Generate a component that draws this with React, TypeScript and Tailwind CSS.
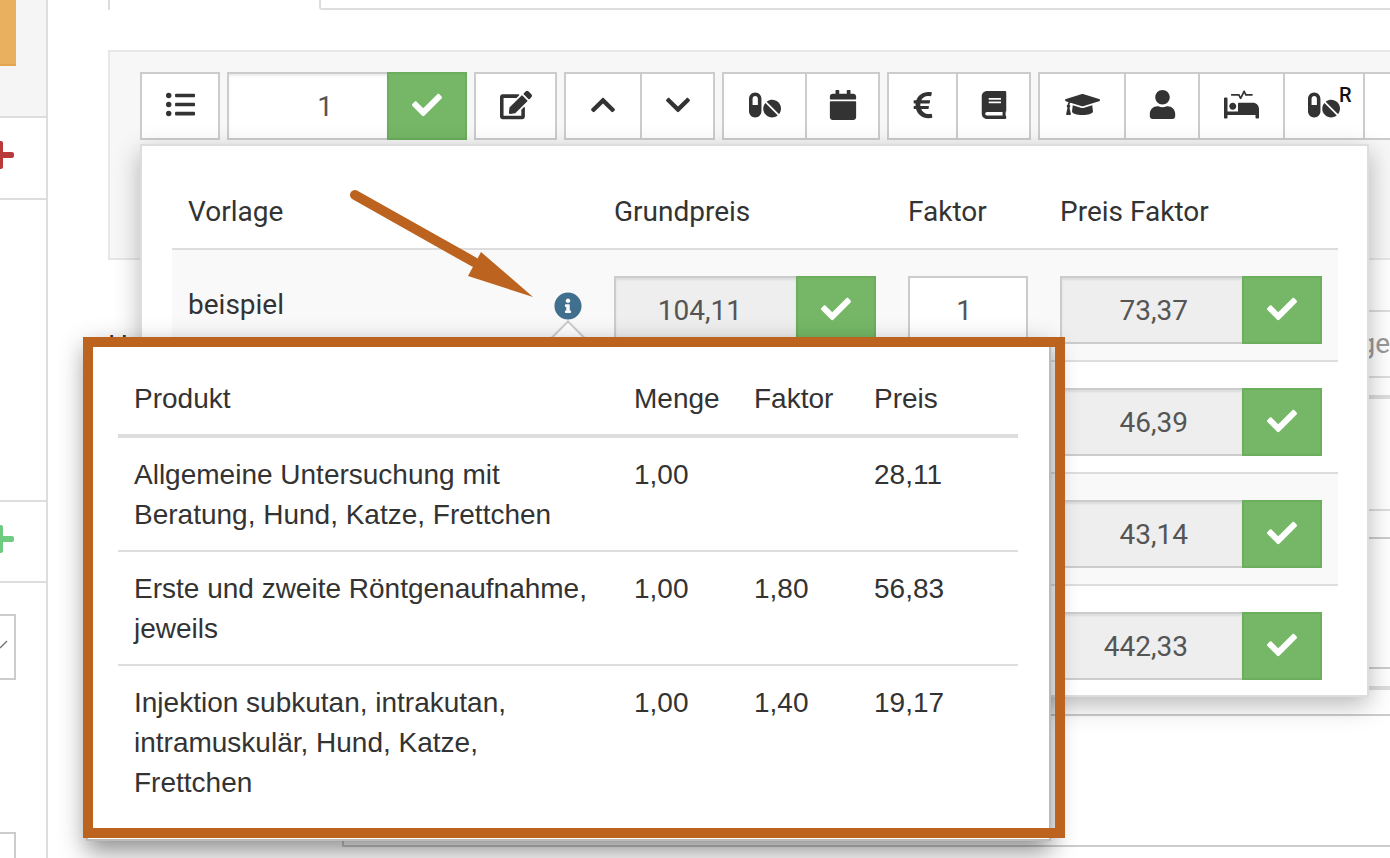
import type { ReactNode } from 'react';
import {
  FaBook,
  FaCalendar,
  FaCheck,
  FaChevronDown,
  FaChevronUp,
  FaEdit,
  FaEuroSign,
  FaGraduationCap,
  FaInfoCircle,
  FaListUl,
  FaPills,
  FaPlus,
  FaProcedures,
  FaUser
} from 'react-icons/fa';

const templates = [
  { name: 'beispiel', base: '104,11', factor: '1', price: '73,37', info: true },
  { name: '', base: '', factor: '', price: '46,39' },
  { name: '', base: '', factor: '', price: '43,14' },
  { name: '', base: '', factor: '', price: '442,33' }
];

const products = [
  { name: 'Allgemeine Untersuchung mit Beratung, Hund, Katze, Frettchen', qty: '1,00', factor: '', price: '28,11' },
  { name: 'Erste und zweite Röntgenaufnahme, jeweils', qty: '1,00', factor: '1,80', price: '56,83' },
  { name: 'Injektion subkutan, intrakutan, intramuskulär, Hund, Katze, Frettchen', qty: '1,00', factor: '1,40', price: '19,17' }
];

function ToolButton({ width, first, children }: { width: string; first?: boolean; children: ReactNode }) {
  return (
    <div className={`${width} ${first ? '' : 'border-l-2 border-l-[#ccc]'} relative flex h-full shrink-0 items-center justify-center pb-[3px] text-[#333]`}>
      {children}
    </div>
  );
}

function ToolGroup({ children }: { children: ReactNode }) {
  return <div className="flex h-[68px] shrink-0 border-2 border-[#ccc] bg-white">{children}</div>;
}

function ConfirmButton() {
  return (
    <div className="flex h-[68px] w-[80px] shrink-0 items-center justify-center border-2 border-[#6bae5b] bg-[#75b766] pb-[3px] text-white">
      <FaCheck size={30} />
    </div>
  );
}

function PriceInput({ value }: { value: string }) {
  return (
    <div className="flex">
      <div className="flex h-[68px] w-[182px] items-center justify-end border-2 border-r-0 border-[#ccc] bg-[#eeeeee] pt-[2px] pr-[54px] text-[#555] shadow-[inset_0_2px_2px_rgba(0,0,0,0.08)]">
        {value}
      </div>
      <ConfirmButton />
    </div>
  );
}

function Sidebar() {
  return (
    <div className="flex h-full w-[48px] shrink-0 flex-col overflow-hidden border-r-2 border-[#ddd] bg-white">
      <div className="h-[118px] shrink-0 border-b-2 border-[#ddd] bg-[#f5f5f5]">
        <div className="h-[66px] w-[16px] border-b-2 border-[#e3a550] bg-[#e9b05f]" />
      </div>
      <div className="flex h-[82px] shrink-0 items-center overflow-hidden border-b-2 border-[#ddd] pb-[6px]">
        <FaPlus size={32} className="-ml-[16px] shrink-0 text-[#b93a3a]" />
      </div>
      <div className="h-[300px] shrink-0" />
      <div className="flex h-[83px] shrink-0 items-center overflow-hidden border-t-2 border-b-2 border-[#ddd] pb-[6px]">
        <FaPlus size={32} className="-ml-[16px] shrink-0 text-[#6fcb7f]" />
      </div>
      <div className="mt-[31px] flex h-[66px] w-[16px] shrink-0 items-center justify-end border-2 border-l-0 border-[#ccc]">
        <svg width="10" height="10" viewBox="0 0 10 10" className="mr-[4px] -mt-[4px]">
          <path d="M0 8 L7 1" stroke="#777" strokeWidth="1.4" fill="none" />
        </svg>
      </div>
      <div className="mt-[152px] h-[40px] w-[16px] shrink-0 border-2 border-l-0 border-[#ccc]" />
    </div>
  );
}

function Toolbar() {
  return (
    <div className="flex gap-[7px] pl-[30px] pt-[20px]">
      <ToolGroup>
        <ToolButton width="w-[76px]" first>
          <FaListUl size={29} />
        </ToolButton>
      </ToolGroup>
      <div className="flex">
        <div className="flex h-[68px] w-[160px] items-center justify-center border-2 border-r-0 border-[#ccc] bg-white pt-[2px] pl-[34px] text-[#555] shadow-[inset_0_2px_2px_rgba(0,0,0,0.08)]">
          1
        </div>
        <ConfirmButton />
      </div>
      <ToolGroup>
        <ToolButton width="w-[79px]" first>
          <FaEdit size={32} />
        </ToolButton>
      </ToolGroup>
      <ToolGroup>
        <ToolButton width="w-[74px]" first>
          <FaChevronUp size={28} />
        </ToolButton>
        <ToolButton width="w-[73px]">
          <FaChevronDown size={28} />
        </ToolButton>
      </ToolGroup>
      <ToolGroup>
        <ToolButton width="w-[81px]" first>
          <FaPills size={32} />
        </ToolButton>
        <ToolButton width="w-[73px]">
          <FaCalendar size={30} />
        </ToolButton>
      </ToolGroup>
      <ToolGroup>
        <ToolButton width="w-[67px]" first>
          <FaEuroSign size={30} />
        </ToolButton>
        <ToolButton width="w-[73px]">
          <FaBook size={28} />
        </ToolButton>
      </ToolGroup>
      <ToolGroup>
        <ToolButton width="w-[84px]" first>
          <FaGraduationCap size={35} />
        </ToolButton>
        <ToolButton width="w-[74px]">
          <FaUser size={29} />
        </ToolButton>
        <ToolButton width="w-[85px]">
          <FaProcedures size={35} />
        </ToolButton>
        <ToolButton width="w-[80px]">
          <FaPills size={32} />
          <span className="absolute left-[54px] top-[11px] text-[20px] leading-[20px] font-medium text-[#111]">R</span>
        </ToolButton>
        <ToolButton width="w-[60px]">
          <span />
        </ToolButton>
      </ToolGroup>
    </div>
  );
}

function BackgroundForm() {
  return (
    <div className="flex">
      <div className="w-[234px] shrink-0 pt-[65px] text-[#333]">H</div>
      <div className="min-w-0 flex-1 pt-[50px]">
        <div className="flex h-[68px] items-center justify-end overflow-hidden border-y-2 border-[#ddd] text-[#999]">ge</div>
        <div className="mt-[17px] h-[116px] border-t-4 border-b-2 border-[#ddd]" />
        <div className="mt-[26px] h-[132px] border-y-2 border-[#ccc]" />
        <div className="mt-[17px] h-[28px] border-t-4 border-[#ddd]" />
        <div className="h-[133px] border-t-2 border-b-2 border-l-2 border-[#ccc]" />
      </div>
    </div>
  );
}

function TemplatePopover() {
  return (
    <div className="absolute left-[140px] top-[144px] z-10 h-[553px] w-[1229px] border-2 border-[#ddd] bg-white pl-[30px] pr-[29px] shadow-[0_8px_24px_rgba(0,0,0,0.28)]">
      <div className="grid grid-cols-[426px_294px_152px_1fr] border-b-2 border-[#ddd] pl-[16px] pt-[46px] pb-[16px] leading-[40px] text-[#333]">
        <div>Vorlage</div>
        <div>Grundpreis</div>
        <div>Faktor</div>
        <div>Preis Faktor</div>
      </div>
      {templates.map((row, i) => (
        <div
          key={i}
          className={`grid grid-cols-[426px_294px_152px_1fr] pl-[16px] pt-[26px] ${i === 3 ? '' : 'h-[112px] border-b-2 border-[#ddd]'} ${i % 2 === 0 && i !== 3 ? 'bg-[#f9f9f9]' : ''}`}
        >
          <div className="flex h-[58px] items-center justify-between pr-[32px] text-[#333]">
            <span>{row.name}</span>
            {row.info && <FaInfoCircle size={28} className="mt-[2px] text-[#41708f]" />}
          </div>
          <div>{row.base && <PriceInput value={row.base} />}</div>
          <div>
            {row.factor && (
              <div className="flex h-[68px] w-[120px] items-center justify-center border-2 border-[#ccc] bg-white pt-[2px] pr-[8px] text-[#555]">
                {row.factor}
              </div>
            )}
          </div>
          <PriceInput value={row.price} />
        </div>
      ))}
    </div>
  );
}

function Arrow() {
  return (
    <svg className="absolute left-[340px] top-[180px] z-20" width="210" height="130" viewBox="340 180 210 130">
      <path d="M355 195 L474 262" stroke="#bd6320" strokeWidth="10" strokeLinecap="round" fill="none" />
      <path d="M533 297 L481 252 L468 276 Z" fill="#bd6320" />
    </svg>
  );
}

function ProductPopup() {
  return (
    <>
      <div className="absolute left-[556px] top-[325px] z-20 h-[24px] w-[24px] rotate-45 border-t-2 border-l-2 border-[#ccc] bg-white" />
      <div className="absolute left-[86px] top-[337px] z-20 h-[504px] w-[965px] border-2 border-[#bbb] bg-white pl-[30px] shadow-[0_10px_24px_rgba(0,0,0,0.45)]">
        <div className="w-[900px] font-['Liberation_Sans',sans-serif] text-[#333]">
          <div className="grid grid-cols-[500px_120px_120px_1fr] border-b-4 border-[#ddd] pl-[16px] pt-[40px] pb-[15px] leading-[40px]">
            <div>Produkt</div>
            <div>Menge</div>
            <div>Faktor</div>
            <div>Preis</div>
          </div>
          {products.map((row, i) => (
            <div
              key={row.price}
              className={`grid grid-cols-[500px_120px_120px_1fr] pt-[17px] pb-[15px] pl-[16px] leading-[40px] ${i < products.length - 1 ? 'border-b-2 border-[#ddd]' : ''}`}
            >
              <div className="pr-[40px]">{row.name}</div>
              <div>{row.qty}</div>
              <div>{row.factor}</div>
              <div>{row.price}</div>
            </div>
          ))}
        </div>
      </div>
      <div className="pointer-events-none absolute left-[83px] top-[337px] z-30 h-[501px] w-[982px] border-[10px] border-[#bd6320]" />
    </>
  );
}

export default function App() {
  return (
    <div className="relative flex h-[858px] w-[1390px] overflow-hidden bg-white font-['Roboto',sans-serif] text-[28px]">
      <Sidebar />
      <div className="min-w-0 flex-1 pl-[60px]">
        <div className="flex h-[10px]">
          <div className="w-[211px] border-l-2 border-[#ddd]" />
          <div className="flex-1 rounded-bl-[3px] border-b-2 border-l-2 border-[#ddd]" />
        </div>
        <div className="mt-[40px] h-[210px] overflow-hidden border-2 border-r-0 border-[#e7e7e7] bg-[#f7f7f7]">
          <Toolbar />
        </div>
        <BackgroundForm />
      </div>
      <TemplatePopover />
      <Arrow />
      <ProductPopup />
    </div>
  );
}
